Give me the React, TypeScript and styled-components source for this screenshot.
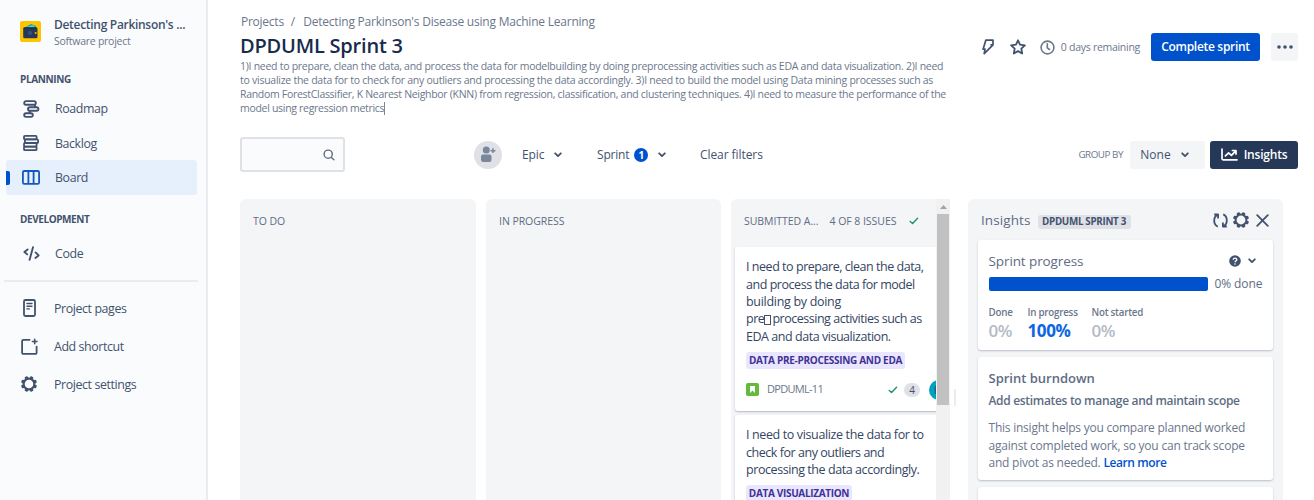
import React from 'react';
import styled, { createGlobalStyle } from 'styled-components';

const GlobalStyle = createGlobalStyle`
  * { box-sizing: border-box; }
  body {
    margin: 0;
    background: #fff;
    font-family: 'Open Sans', 'Noto Sans', sans-serif;
    color: #42526e;
    overflow: hidden;
  }
  svg { display: block; flex: none; }
`;

const Page = styled.div`
  display: flex;
  width: 1314px;
  height: 500px;
  overflow: hidden;
`;

type TxtProps = { $s: number; $ls?: number; $w?: number; $c?: string; $lh?: number; $ml?: number };
const Txt = styled.span<TxtProps>`
  display: block;
  flex: none;
  white-space: pre;
  font-size: ${p => p.$s}px;
  font-weight: ${p => p.$w ?? 400};
  letter-spacing: ${p => p.$ls ?? 0}px;
  line-height: ${p => p.$lh ?? 16}px;
  margin-left: ${p => p.$ml ?? 0}px;
  color: ${p => p.$c ?? 'inherit'};
`;

const Gap = styled.div<{ $w: number }>`
  flex: none;
  width: ${p => p.$w}px;
`;
const Spacer = styled.div`
  flex: 1;
`;

/* Sidebar */
const Sidebar = styled.nav`
  flex: none;
  width: 208px;
  height: 500px;
  background: #fafbfc;
  border-right: 2px solid #ebecef;
  display: flex;
  flex-direction: column;
`;
const ProjectHead = styled.div`
  display: flex;
  gap: 13px;
  padding: 17px 0 0 20px;
  > svg { margin-top: 4px; }
`;
const SideTitle = styled.div<{ $mt: number }>`
  margin: ${p => p.$mt}px 0 0 20px;
  height: 16px;
`;
const NavRow = styled.div<{ $h: number; $mt?: number; $active?: boolean }>`
  display: flex;
  align-items: center;
  gap: 14px;
  height: ${p => p.$h}px;
  margin: ${p => p.$mt ?? 0}px 9px 0 6px;
  padding-left: ${p => (p.$active ? 0 : 15)}px;
  border-radius: 3px;
  background: ${p => (p.$active ? '#e6effc' : 'transparent')};
`;
const NavLabel = styled.span`
  padding-top: 1px;
  font-size: 12.4px;
  letter-spacing: -0.4px;
  line-height: 16px;
  white-space: pre;
`;
const ActiveBar = styled.div`
  width: 4px;
  height: 14px;
  margin-right: -3px;
  border-radius: 0 2px 2px 0;
  background: #0052cc;
`;
const IconBox = styled.div`
  width: 20px;
  display: flex;
  justify-content: center;
`;
const Divider = styled.div`
  height: 2px;
  margin: 10px 8px 7px 4px;
  background: #ebecf0;
`;
const LinkRow = styled.div`
  display: flex;
  align-items: center;
  gap: 15px;
  height: 38px;
  padding-left: 19px;
`;

/* Main */
const Main = styled.main`
  flex: 1;
  min-width: 0;
  padding-left: 32px;
  display: flex;
  flex-direction: column;
`;
const Header = styled.header`
  display: flex;
  justify-content: space-between;
  height: 137px;
  padding-right: 16px;
`;
const HeadText = styled.div`
  padding-top: 14px;
`;
const Crumbs = styled.div`
  display: flex;
  height: 16px;
  padding-left: 1px;
`;
const Goal = styled.div`
  margin-top: -3px;
`;
const CaretLine = styled.div`
  display: flex;
  align-items: center;
`;
const Caret = styled.div`
  width: 1px;
  height: 13px;
  background: #7a869a;
`;
const Actions = styled.div`
  display: flex;
  align-items: center;
  height: 28px;
  margin-top: 33px;
`;
const Button = styled.div<{ $w: number; $bg: string; $ml?: number }>`
  display: flex;
  align-items: center;
  justify-content: center;
  width: ${p => p.$w}px;
  height: 28px;
  margin-left: ${p => p.$ml ?? 0}px;
  border-radius: 3px;
  background: ${p => p.$bg};
  color: #fff;
`;
const Toolbar = styled.div`
  display: flex;
  align-items: center;
  height: 35px;
  padding-right: 16px;
`;
const Search = styled.div`
  display: flex;
  align-items: center;
  justify-content: flex-end;
  width: 105px;
  height: 35px;
  padding-right: 8px;
  border: 2px solid #dfe1e6;
  border-radius: 3px;
  background: #fafbfc;
`;
const AddPeople = styled.div`
  display: flex;
  align-items: center;
  justify-content: center;
  width: 28px;
  height: 28px;
  margin: 0 20px 0 129px;
  border-radius: 50%;
  background: #dfe1e6;
`;
const Filter = styled.div<{ $w: number }>`
  display: flex;
  align-items: center;
  width: ${p => p.$w}px;
`;
const Count = styled.div`
  display: flex;
  align-items: center;
  justify-content: center;
  width: 14px;
  height: 14px;
  margin: 1px 10px 0 5px;
  border-radius: 50%;
  background: #0052cc;
`;

/* Board */
const Board = styled.div`
  display: flex;
  flex: 1;
  margin-top: 27px;
  min-height: 0;
`;
const Column = styled.section<{ $w: number; $mr: number }>`
  flex: none;
  width: ${p => p.$w}px;
  margin-right: ${p => p.$mr}px;
  border-radius: 6px 6px 0 0;
  background: #f4f5f7;
  padding: 14px 0 0 13px;
`;
const ScrollColumn = styled.section`
  flex: none;
  display: flex;
  width: 219px;
  border-radius: 6px 0 0 0;
  background: #f4f5f7;
`;
const ColumnBody = styled.div`
  width: 205px;
  overflow: hidden;
`;
const ColumnHead = styled.div`
  display: flex;
  align-items: center;
  height: 48px;
  padding: 0 0 4px 13px;
`;
const ColumnTitle = styled.span`
  display: block;
  flex: none;
  font-size: 10.5px;
  font-weight: 500;
  letter-spacing: -0.05px;
  line-height: 16px;
  white-space: pre;
  color: #5e6c84;
`;
const Card = styled.article<{ $h: number }>`
  width: 220px;
  height: ${p => p.$h}px;
  margin: 0 0 4px 4px;
  padding: 11px 0 0 11px;
  border-radius: 3px;
  background: #fff;
  box-shadow: 0 1px 2px rgba(9, 30, 66, 0.28);
`;
const CardLine = styled.div`
  display: flex;
  align-items: center;
  height: 17.5px;
`;
const MissingGlyph = styled.span`
  width: 7px;
  height: 10px;
  margin: 1px 1px 0 0;
  border: 1px solid #42526e;
`;
const EpicTag = styled.div<{ $w: number }>`
  display: flex;
  align-items: center;
  justify-content: center;
  width: ${p => p.$w}px;
  height: 17px;
  margin-top: 6px;
  border-radius: 3px;
  background: #eae6ff;
`;
const CardFoot = styled.div`
  display: flex;
  align-items: center;
  height: 18px;
  margin-top: 12px;
`;
const IssueKey = styled.div`
  flex: none;
  width: 129px;
  padding: 0 0 2px 8px;
`;
const Estimate = styled.div`
  flex: none;
  display: flex;
  align-items: center;
  justify-content: center;
  width: 16px;
  height: 14px;
  margin: 1px 9px 0 6px;
  border-radius: 7px;
  background: #dfe1e6;
`;
const Avatar = styled.div`
  flex: none;
  display: flex;
  align-items: center;
  width: 20px;
  height: 20px;
  padding-left: 5px;
  border-radius: 50%;
  background: #00a3bf;
`;
const ScrollTrack = styled.div`
  width: 14px;
  background: #f1f1f1;
`;
const ScrollUp = styled.div`
  display: flex;
  align-items: center;
  justify-content: center;
  height: 15px;
`;
const ScrollThumb = styled.div`
  width: 12px;
  height: 191px;
  margin-left: 1px;
  background: #c1c1c1;
`;
const ResizeGutter = styled.div`
  width: 18px;
  padding: 190px 0 0 4px;
`;
const ResizeHandle = styled.div`
  width: 2px;
  height: 17px;
  background: #ebecf0;
`;

/* Insights */
const Insights = styled.aside`
  flex: none;
  width: 315px;
  padding: 0 10px;
  border-radius: 6px 6px 0 0;
  background: #f4f5f7;
`;
const InsightsHead = styled.div`
  display: flex;
  align-items: center;
  height: 41px;
  padding: 1px 4px 0 3px;
`;
const SprintTag = styled.div`
  display: flex;
  align-items: center;
  justify-content: center;
  width: 93px;
  height: 14px;
  margin: 3px 0 0 7px;
  border-radius: 3px;
  background: #dfe1e6;
`;
const Panel = styled.div<{ $h: number }>`
  height: ${p => p.$h}px;
  margin-bottom: 7px;
  padding: 12px 10px 0 10.5px;
  border-radius: 3px;
  background: #fff;
  box-shadow: 0 1px 2px rgba(9, 30, 66, 0.25);
`;
const PanelHead = styled.div`
  display: flex;
  align-items: center;
  height: 18px;
`;
const ProgressRow = styled.div`
  display: flex;
  align-items: center;
  height: 16px;
  margin-top: 6px;
`;
const Progress = styled.div`
  width: 219px;
  height: 14px;
  margin-right: 7px;
  border-radius: 2px;
  background: #0052cc;
`;
const Stats = styled.div`
  display: flex;
  margin-top: 14px;
`;
const Stat = styled.div<{ $w: number }>`
  width: ${p => p.$w}px;
`;

const Chevron = () => (
  <svg width="8" height="6" viewBox="0 0 8 6" fill="none" stroke="#42526e" strokeWidth="1.8" strokeLinecap="round" strokeLinejoin="round">
    <path d="M1.2 1.3 4 4.1 6.8 1.3" />
  </svg>
);
const Check = () => (
  <svg width="10" height="8" viewBox="0 0 10 8" fill="none" stroke="#1f9463" strokeWidth="1.4" strokeLinecap="round" strokeLinejoin="round">
    <path d="M1.2 4.4 3.6 6.6 8.6 1.3" />
  </svg>
);
const Gear = ({ size, w = 2.2 }: { size: number; w?: number }) => (
  <svg width={size} height={size} viewBox="0 0 16 16" fill="none">
    <circle cx="8" cy="8" r="5.4" stroke="#42526e" strokeWidth={w} />
    {[22.5, 67.5, 112.5, 157.5, 202.5, 247.5, 292.5, 337.5].map(a => (
      <rect key={a} x="6.3" y="0" width="3.4" height="2.6" rx="1" fill="#42526e" transform={`rotate(${a} 8 8)`} />
    ))}
  </svg>
);
const Logo = () => (
  <svg width="21" height="21" viewBox="0 0 21 21">
    <rect width="21" height="21" rx="2" fill="#ffc400" />
    <path d="M5 6.5 11 3l5 2v3H5Z" fill="#00a3bf" />
    <path d="M8 5.5 13 4l2 2H8Z" fill="#57d9a3" />
    <rect x="3.2" y="6.2" width="14.3" height="11" rx="1.5" fill="#253858" />
    <circle cx="10" cy="12" r="2.2" fill="#344f7a" />
    <path d="M3.6 7.2h12.8" stroke="#172b4d" />
    <circle cx="15.7" cy="12" r="1.1" fill="#ffab00" />
  </svg>
);
const RoadmapIcon = () => (
  <svg width="18" height="18" viewBox="0 0 18 18" fill="none" stroke="#42526e" strokeWidth="1.9">
    <rect x="2.2" y="1.1" width="11.6" height="3.6" rx="1.8" />
    <rect x="6" y="7.2" width="10.4" height="3.6" rx="1.8" />
    <rect x="2.2" y="13.3" width="8.6" height="3.6" rx="1.8" />
    <path d="M13 4.6v2.4M7.6 11v2.2" />
  </svg>
);
const BacklogIcon = () => (
  <svg width="18" height="18" viewBox="0 0 18 18" fill="none" stroke="#42526e" strokeWidth="1.8">
    <rect x="2" y="1.8" width="12.6" height="3.6" rx="1" />
    <rect x="2.9" y="5.4" width="13.2" height="3.6" rx="1" />
    <rect x="2" y="9" width="12.6" height="3.6" rx="1" />
    <rect x="2" y="12.6" width="12.6" height="3.6" rx="1" />
  </svg>
);
const BoardIcon = () => (
  <svg width="18" height="15" viewBox="0 0 18 15" fill="none" stroke="#1558bc" strokeWidth="1.8">
    <rect x="0.9" y="1" width="16.2" height="12.8" rx="1.4" />
    <path d="M6.4 1v12.8M11.6 1v12.8" />
  </svg>
);
const CodeIcon = () => (
  <svg width="17" height="15" viewBox="0 0 17 15" fill="none" stroke="#42526e" strokeWidth="1.9" strokeLinecap="round" strokeLinejoin="round">
    <path d="M4.6 3.4 1.4 6 4.2 8.4M12.6 6.4 15.6 9.4 12.4 12M10 1.2 6.6 13.8" />
  </svg>
);
const PageIcon = () => (
  <svg width="13" height="18" viewBox="0 0 13 18" fill="none" stroke="#42526e" strokeWidth="1.8" strokeLinecap="round">
    <rect x="1" y="1" width="11" height="16" rx="1.4" />
    <path d="M4 4.5h5M4 7.2h5M4 9.9h2.4" strokeWidth="1.4" />
  </svg>
);
const ShortcutIcon = () => (
  <svg width="17" height="17" viewBox="0 0 17 17" fill="none" stroke="#42526e" strokeWidth="1.8" strokeLinecap="round">
    <path d="M8.6 1.8H2.3a1.2 1.2 0 0 0-1.2 1.2v11.7a1.2 1.2 0 0 0 1.2 1.2h12.1a1.2 1.2 0 0 0 1.2-1.2V8.6" />
    <path d="M13.7 1.2v4.6M11.4 3.5h4.6" strokeWidth="1.6" />
  </svg>
);
const BoltIcon = () => (
  <svg width="12" height="16" viewBox="0 0 12 16" fill="none" stroke="#42526e" strokeWidth="1.7" strokeLinejoin="round">
    <path d="M3.8 1.2h7.2v4.6L2.2 14.6l.8-4.4H1.100Z" />
    <path d="M11 5.800H8.400" />
  </svg>
);
const StarIcon = () => (
  <svg width="16" height="16" viewBox="0 0 16 16" fill="none" stroke="#42526e" strokeWidth="1.8" strokeLinejoin="round">
    <path d="m8 1.3 2 4.4 4.9.6-3.6 3.3.9 4.9L8 12.1l-4.2 2.4.9-4.9L1.1 6.3 6 5.7Z" />
  </svg>
);
const ClockIcon = () => (
  <svg width="15" height="15" viewBox="0 0 15 15" fill="none" stroke="#6b778c" strokeWidth="1.6" strokeLinecap="round">
    <circle cx="7.5" cy="7.5" r="6.4" />
    <path d="M7.3 3.8v4l2.2 1.7" />
  </svg>
);
const DotsIcon = () => (
  <svg width="16" height="4" viewBox="0 0 16 4" fill="#42526e">
    <circle cx="2" cy="2" r="1.8" /><circle cx="8" cy="2" r="1.8" /><circle cx="14" cy="2" r="1.8" />
  </svg>
);
const SearchIcon = () => (
  <svg width="12" height="12" viewBox="0 0 12 12" fill="none" stroke="#5e6c84" strokeWidth="1.4" strokeLinecap="round">
    <circle cx="5.2" cy="5.2" r="4.1" /><path d="m8.4 8.4 2.5 2.3" />
  </svg>
);
const PersonAddIcon = () => (
  <svg width="16" height="17" viewBox="0 0 16 17" fill="#7a869a">
    <circle cx="6.3" cy="4" r="3.5" />
    <path d="M1 10.5Q1 8.500 3 8.5h6.5q2 0 2 2v3q0 2.500-2.500 2.500H3.500Q1 16 1 13.500Z" />
    <path d="M13 2.3v4.8M10.6 4.7h4.8" stroke="#7a869a" strokeWidth="1.5" />
  </svg>
);
const ChartIcon = () => (
  <svg width="17" height="13" viewBox="0 0 17 13" fill="none" stroke="#fff" strokeWidth="1.7" strokeLinecap="round" strokeLinejoin="round">
    <path d="M1 1v9.6q0 1.2 1.2 1.2H16M4.4 7.8 7.6 4.8l2.8 2.6 4.4-4.6M11.4 2.500h3.600v3.600" />
  </svg>
);
const StoryIcon = () => (
  <svg width="13" height="13" viewBox="0 0 13 13">
    <rect width="13" height="13" rx="1.8" fill="#63ba3c" />
    <path d="M4 3h5v7L6.5 7.6 4 10Z" fill="#fff" />
  </svg>
);
const RefreshIcon = () => (
  <svg width="15" height="15" viewBox="0 0 15 15" fill="none" stroke="#42526e" strokeWidth="1.8" strokeLinejoin="round">
    <path d="M4.800 13.600C2.300 12.600 1.200 10.200 1.200 7.500c0-2.600 1.100-4.700 3.400-5.700M1.200 1.500h3.900v3.900" />
    <path d="M10.200 1.400c2.500 1 3.600 3.400 3.600 6.100 0 2.600-1.100 4.700-3.400 5.700M13.800 13.500H9.900V9.600" />
  </svg>
);
const CloseIcon = () => (
  <svg width="13" height="13" viewBox="0 0 13 13" stroke="#42526e" strokeWidth="1.8" strokeLinecap="round">
    <path d="m1.2 1.2 10.6 10.6M11.8 1.2 1.2 11.8" />
  </svg>
);
const HelpIcon = () => (
  <svg width="12" height="12" viewBox="0 0 12 12" fill="none">
    <circle cx="6" cy="6" r="5.8" fill="#42526e" />
    <path d="M4.3 4.7c0-2.2 3.5-2.1 3.5 0C7.8 5.9 6 5.9 6 7.2" stroke="#fff" strokeWidth="1.3" />
    <circle cx="6" cy="9" r=".8" fill="#fff" />
  </svg>
);

const GREY = '#6b778c';
const INK = '#5e6c84';

const goalLines: [string, number][] = [
  ['1)I need to prepare, clean the data, and process the data for modelbuilding by doing preprocessing activities such as EDA and data visualization. 2)I need', -0.27],
  ['to visualize the data for to check for any outliers and processing the data accordingly. 3)I need to build the model using Data mining processes such as', -0.26],
  ['Random ForestClassifier, K Nearest Neighbor (KNN) from regression, classification, and clustering techniques. 4)I need to measure the performance of the', -0.3],
];

const CardText = ({ t, ls = -0.46 }: { t: string; ls?: number }) => (
  <CardLine><Txt $s={12.5} $ls={ls} $lh={17} $c="#344563">{t}</Txt></CardLine>
);

export default function App() {
  return (
    <Page>
      <GlobalStyle />
      <Sidebar>
        <ProjectHead>
          <Logo />
          <div>
            <Txt $s={12} $w={600} $ls={-0.3}>Detecting Parkinson's ...</Txt>
            <Txt $s={10.5} $ls={-0.26} $c={GREY}>Software project</Txt>
          </div>
        </ProjectHead>
        <SideTitle $mt={22}><Txt $s={10} $w={700} $ls={-0.35}>PLANNING</Txt></SideTitle>
        <NavRow $h={35} $mt={4}><IconBox><RoadmapIcon /></IconBox><NavLabel>Roadmap</NavLabel></NavRow>
        <NavRow $h={34}><IconBox><BacklogIcon /></IconBox><NavLabel>Backlog</NavLabel></NavRow>
        <NavRow $h={35} $active><ActiveBar /><IconBox><BoardIcon /></IconBox><NavLabel>Board</NavLabel></NavRow>
        <SideTitle $mt={16}><Txt $s={10} $w={700} $ls={-0.42}>DEVELOPMENT</Txt></SideTitle>
        <NavRow $h={34} $mt={9}><IconBox><CodeIcon /></IconBox><NavLabel>Code</NavLabel></NavRow>
        <Divider />
        <LinkRow><IconBox><PageIcon /></IconBox><NavLabel>Project pages</NavLabel></LinkRow>
        <LinkRow><IconBox><ShortcutIcon /></IconBox><NavLabel>Add shortcut</NavLabel></LinkRow>
        <LinkRow><IconBox><Gear size={16} /></IconBox><NavLabel>Project settings</NavLabel></LinkRow>
      </Sidebar>

      <Main>
        <Header>
          <HeadText>
            <Crumbs>
              <Txt $s={12} $ls={-0.25} $c={GREY}>Projects</Txt>
              <Txt $s={12} $ml={7} $c={GREY}>/</Txt>
              <Txt $s={12} $ls={-0.22} $ml={8} $c={GREY}>Detecting Parkinson's Disease using Machine Learning</Txt>
            </Crumbs>
            <Txt $s={20} $w={600} $ls={-0.2} $lh={32} $c="#172b4d">DPDUML Sprint 3</Txt>
            <Goal>
              {goalLines.map(([t, ls]) => <Txt key={t} $s={10.5} $ls={ls} $lh={14} $c={GREY}>{t}</Txt>)}
              <CaretLine><Txt $s={10.5} $ls={-0.3} $lh={14} $c={GREY}>model using regression metrics</Txt><Caret /></CaretLine>
            </Goal>
          </HeadText>
          <Actions>
            <BoltIcon />
            <Gap $w={16} />
            <StarIcon />
            <Gap $w={14} />
            <ClockIcon />
            <Txt $s={10.5} $ls={-0.28} $ml={6} $c={GREY}>0 days remaining</Txt>
            <Button $w={109} $bg="#0052cc" $ml={11}><Txt $s={12} $w={600} $ls={-0.3}>Complete sprint</Txt></Button>
            <Button $w={27} $bg="#f4f5f7" $ml={11}><DotsIcon /></Button>
          </Actions>
        </Header>

        <Toolbar>
          <Search><SearchIcon /></Search>
          <AddPeople><PersonAddIcon /></AddPeople>
          <Filter $w={75}><Txt $s={12} $w={500} $ls={-0.1}>Epic</Txt><Gap $w={10} /><Chevron /></Filter>
          <Filter $w={103}><Txt $s={12} $w={500} $ls={-0.2}>Sprint</Txt><Count><Txt $s={10} $w={700} $c="#fff">1</Txt></Count><Chevron /></Filter>
          <Txt $s={12} $w={500} $ls={-0.07}>Clear filters</Txt>
          <Spacer />
          <Txt $s={9.8} $ls={-0.45} $c={GREY}>GROUP BY</Txt>
          <Button $w={75} $bg="#f4f5f7" $ml={7}><Txt $s={12} $w={500} $c="#42526e">None</Txt><Gap $w={10} /><Chevron /><Gap $w={6} /></Button>
          <Button $w={88} $bg="#253858" $ml={5}><ChartIcon /><Txt $s={12} $w={600} $ls={-0.2} $ml={6}>Insights</Txt></Button>
        </Toolbar>

        <Board>
          <Column $w={236} $mr={10}><ColumnTitle>TO DO</ColumnTitle></Column>
          <Column $w={235} $mr={10}><ColumnTitle>IN PROGRESS</ColumnTitle></Column>
          <ScrollColumn>
            <ColumnBody>
              <ColumnHead>
                <ColumnTitle>SUBMITTED A...</ColumnTitle>
                <Gap $w={11} />
                <ColumnTitle>4 OF 8 ISSUES</ColumnTitle>
                <Gap $w={13} />
                <Check />
              </ColumnHead>
              <Card $h={164}>
                <CardText t="I need to prepare, clean the data," />
                <CardText t="and process the data for model" />
                <CardText t="building by doing" ls={-0.3} />
                <CardLine>
                  <Txt $s={12.5} $ls={-0.46} $c="#344563">pre</Txt>
                  <MissingGlyph />
                  <Txt $s={12.5} $ls={-0.48} $c="#344563">processing activities such as</Txt>
                </CardLine>
                <CardText t="EDA and data visualization." />
                <EpicTag $w={159}><Txt $s={10} $w={700} $ls={-0.3} $c="#403294">DATA PRE-PROCESSING AND EDA</Txt></EpicTag>
                <CardFoot>
                  <StoryIcon />
                  <IssueKey><Txt $s={11} $ls={-0.7} $c={GREY}>DPDUML-11</Txt></IssueKey>
                  <Check />
                  <Estimate><Txt $s={10}>4</Txt></Estimate>
                  <Avatar><Txt $s={10} $w={600}>K</Txt></Avatar>
                </CardFoot>
              </Card>
              <Card $h={120}>
                <CardText t="I need to visualize the data for to" ls={-0.37} />
                <CardText t="check for any outliers and" />
                <CardText t="processing the data accordingly." ls={-0.43} />
                <EpicTag $w={106}><Txt $s={10} $w={700} $ls={-0.33} $c="#403294">DATA VISUALIZATION</Txt></EpicTag>
              </Card>
            </ColumnBody>
            <ScrollTrack>
              <ScrollUp><svg width="7" height="4" viewBox="0 0 7 4"><path d="M3.5 0 7 4H0Z" fill="#a3a3a3" /></svg></ScrollUp>
              <ScrollThumb />
            </ScrollTrack>
          </ScrollColumn>
          <ResizeGutter><ResizeHandle /></ResizeGutter>

          <Insights>
            <InsightsHead>
              <Txt $s={13.5} $w={500} $ls={0.1} $c={INK}>Insights</Txt>
              <SprintTag><Txt $s={9.8} $w={700} $ls={-0.3}>DPDUML SPRINT 3</Txt></SprintTag>
              <Spacer />
              <RefreshIcon /><Gap $w={5} /><Gear size={16} w={2} /><Gap $w={7} /><CloseIcon />
            </InsightsHead>
            <Panel $h={110}>
              <PanelHead>
                <Txt $s={13.5} $w={500} $ls={-0.1} $c={INK}>Sprint progress</Txt>
                <Spacer />
                <HelpIcon />
                <Gap $w={7} />
                <Chevron />
                <Gap $w={7} />
              </PanelHead>
              <ProgressRow><Progress /><Txt $s={12} $w={500} $ls={-0.1} $c={INK}>0% done</Txt></ProgressRow>
              <Stats>
                <Stat $w={39}><Txt $s={9.8} $w={600} $ls={-0.2} $lh={14} $c={GREY}>Done</Txt><Txt $s={17} $w={600} $ls={-0.5} $lh={21} $c="#b3bac5">0%</Txt></Stat>
                <Stat $w={64}><Txt $s={9.8} $w={600} $ls={-0.25} $lh={14} $c={GREY}>In progress</Txt><Txt $s={17} $w={700} $ls={-0.4} $lh={21} $c="#0c66e4">100%</Txt></Stat>
                <Stat $w={64}><Txt $s={9.8} $w={600} $ls={-0.25} $lh={14} $c={GREY}>Not started</Txt><Txt $s={17} $w={600} $ls={-0.5} $lh={21} $c="#b3bac5">0%</Txt></Stat>
              </Stats>
            </Panel>
            <Panel $h={123}>
              <PanelHead><Txt $s={13} $w={600} $c={INK}>Sprint burndown</Txt></PanelHead>
              <Txt $s={12} $w={600} $ls={-0.32} $lh={28} $c={INK}>Add estimates to manage and maintain scope</Txt>
              <Txt $s={12} $ls={-0.23} $lh={26} $c={GREY}>This insight helps you compare planned worked</Txt>
              <Txt $s={12} $ls={-0.22} $lh={9} $c={GREY}>against completed work, so you can track scope</Txt>
              <CardLine style={{ marginTop: 4 }}>
                <Txt $s={12} $ls={-0.22} $c={GREY}>and pivot as needed. </Txt>
                <Txt $s={12} $w={600} $ls={-0.4} $c="#0052cc">Learn more</Txt>
              </CardLine>
            </Panel>
            <Panel $h={60} />
          </Insights>
        </Board>
      </Main>
    </Page>
  );
}
